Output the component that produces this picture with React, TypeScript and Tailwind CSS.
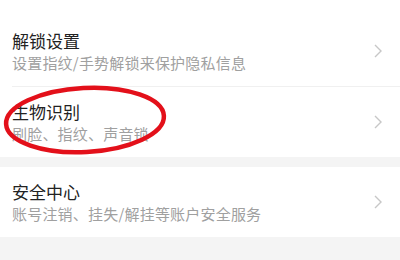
import React from 'react';

type Item = { title: string; desc: string };

const font = { fontFamily: '"Noto Sans CJK SC", "Noto Sans", sans-serif' };

function Chevron() {
  return (
    <svg width="10" height="16" viewBox="0 0 10 16" className="shrink-0">
      <path d="M2 2 L8 8 L2 14" fill="none" stroke="#c7c7c7" strokeWidth="1.4" />
    </svg>
  );
}

function Row({ item, divider }: { item: Item; divider?: boolean }) {
  return (
    <div className="relative bg-white">
      <div className="flex items-center justify-between h-[70px] pl-3 pr-[17px]">
        <div className="flex flex-col">
          <span className="text-[17px] leading-[22px] text-[#222]">{item.title}</span>
          <span className="text-[15px] leading-[20px] tracking-[0.2px] text-[#a0a0a0] mt-[1px]">{item.desc}</span>
        </div>
        <Chevron />
      </div>
      {divider && <div className="ml-3 h-px bg-[#f0f0f0]" />}
    </div>
  );
}

export default function App() {
  return (
    <div className="relative w-[400px] h-[260px] bg-[#f4f4f4] overflow-hidden" style={font}>
      <div className="bg-white h-4" />
      <Row item={{ title: '解锁设置', desc: '设置指纹/手势解锁来保护隐私信息' }} divider />
      <Row item={{ title: '生物识别', desc: '刷脸、指纹、声音锁' }} />
      <div className="h-[10px]" />
      <Row item={{ title: '安全中心', desc: '账号注销、挂失/解挂等账户安全服务' }} />

      <svg className="absolute left-0 top-0 pointer-events-none" width="400" height="260">
        <ellipse
          cx="85"
          cy="120"
          rx="79"
          ry="32"
          fill="none"
          stroke="#e3101a"
          strokeWidth="4.5"
          transform="rotate(-3 85 120)"
        />
      </svg>
    </div>
  );
}
